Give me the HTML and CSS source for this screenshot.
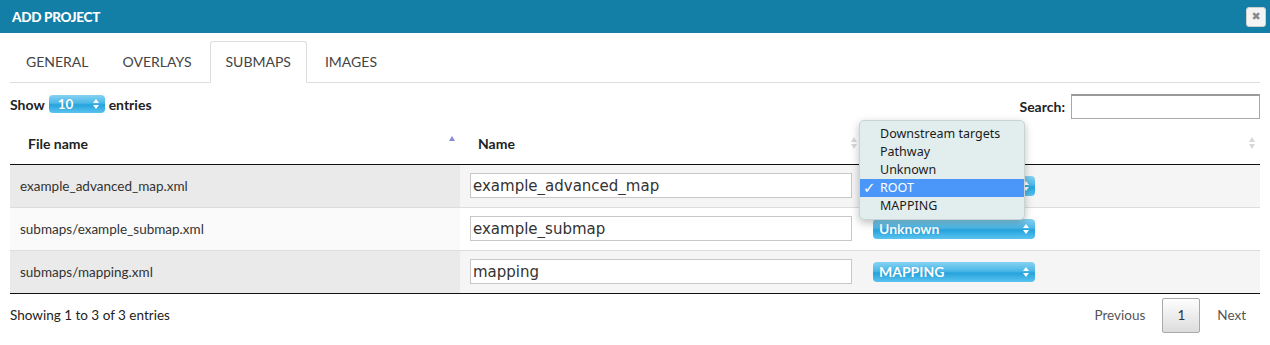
FILE: index.html
```html
<!DOCTYPE html>
<html lang="en">
<head>
    <meta charset="UTF-8">
    <title>Add Project</title>
    <link rel="stylesheet" href="styles.css">
</head>
<body>
    <!-- Barra de título -->
    <div class="titlebar">
        <span class="title">ADD PROJECT</span>
        <button class="close-btn">&#10006;</button>
    </div>

    <div class="content">
        <!-- Abas -->
        <ul class="tabs">
            <li class="tab">GENERAL</li>
            <li class="tab">OVERLAYS</li>
            <li class="tab active">SUBMAPS</li>
            <li class="tab">IMAGES</li>
        </ul>

        <div class="toolbar">
            <div class="length">
                <b>Show</b>
                <span class="pill small">10 <span class="arrows"><i class="up"></i><i class="down"></i></span></span>
                <b>entries</b>
            </div>
            <div class="search">
                <b>Search:</b>
                <input type="text" class="search-input">
            </div>
        </div>

        <div class="table-wrap">
            <table class="grid">
                <thead>
                    <tr>
                        <th class="c1">File name <span class="sort asc"><i class="up"></i></span></th>
                        <th class="c2">Name <span class="sort"><i class="up"></i><i class="down"></i></span></th>
                        <th class="c3"><span class="sort"><i class="up"></i><i class="down"></i></span></th>
                    </tr>
                </thead>
                <tbody>
                    <tr class="odd">
                        <td class="c1">example_advanced_map.xml</td>
                        <td class="c2"><input class="name-input" value="example_advanced_map"></td>
                        <td class="c3"><span class="pill">ROOT <span class="arrows"><i class="up"></i><i class="down"></i></span></span></td>
                    </tr>
                    <tr class="even">
                        <td class="c1">submaps/example_submap.xml</td>
                        <td class="c2"><input class="name-input" value="example_submap"></td>
                        <td class="c3"><span class="pill">Unknown <span class="arrows"><i class="up"></i><i class="down"></i></span></span></td>
                    </tr>
                    <tr class="odd">
                        <td class="c1">submaps/mapping.xml</td>
                        <td class="c2"><input class="name-input" value="mapping"></td>
                        <td class="c3"><span class="pill">MAPPING <span class="arrows"><i class="up"></i><i class="down"></i></span></span></td>
                    </tr>
                </tbody>
            </table>

            <!-- Menu aberto do select -->
            <ul class="menu">
                <li>Downstream targets</li>
                <li>Pathway</li>
                <li>Unknown</li>
                <li class="selected"><span class="check">&#10003;</span>ROOT</li>
                <li>MAPPING</li>
            </ul>
        </div>

        <div class="footer">
            <span class="info">Showing 1 to 3 of 3 entries</span>
            <div class="paging">
                <span class="page-link">Previous</span>
                <span class="page-btn">1</span>
                <span class="page-link last">Next</span>
            </div>
        </div>
    </div>
</body>
</html>
```

FILE: styles.css
```css
* {
    margin: 0;
    padding: 0;
    box-sizing: border-box;
}

body {
    width: 1270px;
    height: 345px;
    background-color: #ffffff;
    font-family: 'Lato', sans-serif;
    font-size: 13.5px;
    color: #333333;
    overflow: hidden;
}

/* Barra de título */
.titlebar {
    height: 33px;
    background-color: #137fa6;
    display: flex;
    align-items: center;
    justify-content: space-between;
    padding: 0 4px 0 12px;
}

.title {
    color: #ffffff;
    font-weight: 900;
    font-size: 13.5px;
    letter-spacing: -0.3px;
    padding-top: 1px;
}

.close-btn {
    width: 20px;
    height: 20px;
    border: 1px solid #d0d0d0;
    border-radius: 3px;
    background-color: #f4f4f4;
    color: #8a8a8a;
    font-size: 11px;
    line-height: 18px;
    text-align: center;
    font-family: 'DejaVu Sans', sans-serif;
    margin-top: 1px;
}

.content {
    padding: 8px 10px 0 10px;
}

/* Abas */
.tabs {
    list-style: none;
    display: flex;
    border-bottom: 1px solid #dddddd;
    height: 42px;
}

.tab {
    padding: 0 15px;
    height: 42px;
    line-height: 40px;
    margin-right: 2px;
    border: 1px solid transparent;
    border-radius: 3px 3px 0 0;
    font-size: 14px;
    color: #444444;
}

.tab.active {
    border-color: #dddddd;
    border-bottom-color: #ffffff;
    background-color: #ffffff;
}

/* Show / Search */
.toolbar {
    display: flex;
    justify-content: space-between;
    align-items: flex-start;
    margin-top: 11px;
    height: 29px;
}

.length {
    display: flex;
    align-items: center;
    gap: 4px;
    margin-top: 1px;
}

.length b, .search b {
    font-weight: 700;
    font-size: 14px;
    color: #222222;
}

.search {
    display: flex;
    align-items: center;
    gap: 6px;
}

.search-input {
    width: 189px;
    height: 25px;
    border: 1px solid #a8a8a8;
    border-top: 2px solid #9a9a9a;
    background-color: #ffffff;
}

/* Select azul estilo mac */
.pill {
    display: inline-flex;
    align-items: center;
    justify-content: space-between;
    width: 162px;
    height: 20px;
    padding: 0 6px 0 6px;
    border-radius: 4px;
    background: linear-gradient(#86d2f1, #4bb8e8 45%, #25a3dc 55%, #5ac3ef);
    color: #ffffff;
    font-weight: 700;
    font-size: 14px;
    text-shadow: 0 0 1px rgba(0, 80, 130, 0.3);
}

.pill.small {
    width: 56px;
    height: 18px;
    font-size: 13.5px;
    padding-left: 9px;
}

.arrows {
    display: flex;
    flex-direction: column;
    gap: 2px;
}

.arrows i, .sort i {
    display: block;
    width: 0;
    height: 0;
    border-left: 3px solid transparent;
    border-right: 3px solid transparent;
}

.arrows .up {
    border-bottom: 4px solid #ffffff;
}

.arrows .down {
    border-top: 4px solid #ffffff;
}

/* Tabela */
.table-wrap {
    position: relative;
}

.grid {
    width: 1250px;
    border-collapse: collapse;
    table-layout: fixed;
}

.grid th {
    position: relative;
    height: 41px;
    text-align: left;
    font-weight: 700;
    font-size: 14px;
    color: #222222;
    padding: 0 18px;
    border-bottom: 1px solid #111111;
    vertical-align: middle;
}

.c1 { width: 450px; }
.c2 { width: 402px; }
.c3 { width: 398px; }

.sort {
    position: absolute;
    right: 5px;
    top: 14px;
    display: flex;
    flex-direction: column;
    gap: 2px;
}

.sort .up {
    border-bottom: 5px solid #d8d8d8;
}

.sort .down {
    border-top: 5px solid #d8d8d8;
}

.sort.asc {
    top: 13px;
    right: 5px;
}

.sort.asc .up {
    border-bottom-color: #8888d8;
}

.grid td {
    height: 43px;
    padding: 0 10px;
    border-top: 1px solid #dddddd;
    font-size: 13.5px;
    color: #333333;
    vertical-align: middle;
}

.grid tr:first-child td {
    border-top: none;
}

.grid tbody tr:last-child td {
    border-bottom: 1px solid #111111;
}

.odd td { background-color: #f5f5f5; }
.odd td.c1 { background-color: #eaeaea; }
.even td { background-color: #ffffff; }
.even td.c1 { background-color: #fafafa; }

.name-input {
    width: 382px;
    height: 25px;
    border: 1px solid #c8c8c8;
    background-color: #ffffff;
    padding: 0 2px;
    font-family: 'DejaVu Sans', sans-serif;
    font-size: 15px;
    color: #333333;
}

.grid td.c3 {
    padding-left: 11px;
}

/* Menu aberto */
.menu {
    position: absolute;
    left: 849px;
    top: -3px;
    width: 166px;
    list-style: none;
    padding: 4px 0;
    background-color: #e2eeee;
    border: 1px solid #c9d3d3;
    border-radius: 5px;
    box-shadow: 0 3px 8px rgba(0, 0, 0, 0.25);
    font-family: 'Noto Sans', 'Liberation Sans', sans-serif;
    font-size: 12.5px;
    color: #1b1b1b;
}

.menu li {
    height: 18px;
    line-height: 18px;
    padding-left: 20px;
    position: relative;
}

.menu li.selected {
    background-color: #4b97f9;
    color: #ffffff;
}

.check {
    position: absolute;
    left: 3px;
    top: 0;
    width: 14px;
    overflow: hidden;
    font-size: 15px;
    line-height: 18px;
    font-weight: 700;
    font-family: 'DejaVu Sans', sans-serif;
}

/* Rodapé */
.footer {
    display: flex;
    justify-content: space-between;
    align-items: center;
    margin-top: 4px;
    height: 35px;
}

.info {
    color: #222222;
}

.paging {
    display: flex;
    align-items: center;
}

.page-link {
    color: #555555;
    padding: 0 17px;
}

.page-link.last {
    padding-right: 14px;
}

.page-btn {
    width: 38px;
    height: 35px;
    line-height: 33px;
    text-align: center;
    border: 1px solid #a9a9a9;
    border-radius: 2px;
    background: linear-gradient(#fefefe, #dcdcdc);
    color: #333333;
}
```
